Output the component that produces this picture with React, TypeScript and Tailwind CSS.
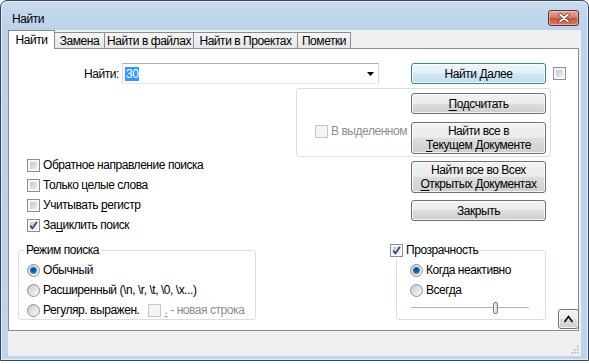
import React from "react";

function Check({ checked = false, disabled = false }: { checked?: boolean; disabled?: boolean }) {
  return (
    <span
      className={`relative inline-block w-[13px] h-[13px] shrink-0 border ${
        disabled ? "border-[#c8c8c8] bg-[#f4f4f4]" : "border-[#8e8f8f] bg-[#f7f7f7]"
      }`}
    >
      {!disabled && <span className="absolute inset-[2px] bg-[linear-gradient(135deg,#c2c6cc,#eef0f2)]" />}
      {checked && (
        <svg className="absolute left-0 top-0" width="11" height="11" viewBox="0 0 11 11">
          <path d="M2.2 5.6 L4.4 8.4 L9 1.8" fill="none" stroke="#2c4684" strokeWidth="1.7" />
        </svg>
      )}
    </span>
  );
}

function Radio({ on = false }: { on?: boolean }) {
  return (
    <span className="relative inline-flex items-center justify-center w-[13px] h-[13px] shrink-0 rounded-full border border-[#8e8f8f] bg-[linear-gradient(135deg,#c6c9ce,#fbfbfb)]">
      {on && (
        <span className="w-[7px] h-[7px] rounded-full bg-[radial-gradient(circle_at_45%_40%,#0b3f7a_0%,#1d6db5_45%,#7cc4f0_100%)]" />
      )}
    </span>
  );
}

function Btn({
  children,
  className = "",
  focus = false,
}: {
  children: React.ReactNode;
  className?: string;
  focus?: boolean;
}) {
  return (
    <div
      className={`flex flex-col items-center justify-center shrink-0 rounded-[3px] border text-center leading-[14px] whitespace-nowrap shadow-[inset_0_0_0_1px_rgba(255,255,255,0.75)] ${
        focus
          ? "border-[#3c7fb1] bg-[linear-gradient(#eef7fc,#e2f0f8_50%,#d2e7f4_50%,#c4deee)]"
          : "border-[#707070] bg-[linear-gradient(#f2f2f2,#ebebeb_50%,#dddddd_50%,#cfcfcf)]"
      } ${className}`}
    >
      {children}
    </div>
  );
}

function CheckRow({ checked, children }: { checked?: boolean; children: React.ReactNode }) {
  return (
    <div className="flex items-center gap-[3px] h-[16px] whitespace-nowrap">
      <Check checked={checked} />
      <span>{children}</span>
    </div>
  );
}

function RadioRow({ on, children }: { on?: boolean; children: React.ReactNode }) {
  return (
    <div className="flex items-center gap-[3px] h-[16px] whitespace-nowrap">
      <Radio on={on} />
      {children}
    </div>
  );
}

export default function App() {
  return (
    <div className="w-[589px] h-[364px] bg-white overflow-hidden font-['Liberation_Sans',Arial,sans-serif] text-[12px] tracking-[-0.45px] text-black">
      <div className="w-[589px] h-[361px] flex flex-col rounded-t-[7px] border border-[#3b4654] bg-[linear-gradient(#c8dbef,#bad2ea_30px,#bdd4ec)] shadow-[inset_0_0_0_1px_rgba(255,255,255,0.55)]">
        {/* title bar */}
        <div className="h-[29px] shrink-0 flex pl-[11px] pr-[9px]">
          <span className="mt-[10px] leading-[16px]">Найти</span>
          <div className="ml-auto mt-[9px] w-[31px] h-[16px] rounded-[3px] border border-[#6b2c22] bg-[linear-gradient(#e9a99b,#d4796a_50%,#c2503c_50%,#d7826d)] flex items-center justify-center shadow-[inset_0_0_0_1px_rgba(255,255,255,0.35)]">
            <svg width="12" height="10" viewBox="0 0 12 10">
              <path d="M2 1.5 L10 8.5 M10 1.5 L2 8.5" stroke="#5a2a24" strokeWidth="3.4" strokeLinecap="round" />
              <path d="M2 1.5 L10 8.5 M10 1.5 L2 8.5" stroke="#ffffff" strokeWidth="2" strokeLinecap="round" />
            </svg>
          </div>
        </div>

        {/* client area */}
        <div className="mx-[7px] mb-[4px] flex-1 flex flex-col bg-[#f0f0f0]">
          {/* tabs */}
          <div className="relative z-10 h-[18px] shrink-0 flex items-end">
            <div className="h-[19px] w-[47px] -mb-[1px] bg-white border border-b-0 border-[#898c95] flex items-center justify-center leading-[16px]">
              Найти
            </div>
            {[
              ["Замена", "w-[50px]"],
              ["Найти в файлах", "w-[89px]"],
              ["Найти в Проектах", "w-[104px]"],
              ["Пометки", "w-[53px]"],
            ].map(([t, w]) => (
              <div
                key={t}
                className={`${w} h-[16px] border-t border-r border-[#898c95] bg-[linear-gradient(#f5f5f5,#e6e6e6)] flex items-center justify-center leading-[14px] whitespace-nowrap`}
              >
                {t}
              </div>
            ))}
          </div>

          {/* tab panel */}
          <div className="h-[283px] w-[571px] shrink-0 border border-[#898c95] bg-white flex flex-col">
            {/* row: find what */}
            <div className="mt-[14px] h-[21px] shrink-0 flex items-center">
              <span className="w-[110px] text-right">Найти:</span>
              <div className="ml-[3px] w-[257px] h-[21px] flex items-center border border-[#abadb3] border-l-[#d8dde4] border-r-[#d8dde4] border-b-[#e3e9ef]">
                <span className="ml-[2px] px-[1px] h-[14px] leading-[14px] bg-[#3399ff] text-white">30</span>
                <svg className="ml-auto mr-[4px]" width="7" height="4" viewBox="0 0 7 4">
                  <path d="M0 0 H7 L3.5 4 Z" fill="#000" />
                </svg>
              </div>
              <Btn focus className="ml-[32px] w-[135px] h-[21px]">
                Найти Далее
              </Btn>
              <span className="ml-[7px] flex">
                <Check />
              </span>
            </div>

            {/* middle */}
            <div className="mt-[4px] h-[133px] shrink-0 flex items-start">
              <div className="w-[287px] pt-[69px] pl-[18px] flex flex-col gap-[4px]">
                <CheckRow>Обратное направление поиска</CheckRow>
                <CheckRow>Только целые слова</CheckRow>
                <CheckRow>
                  Учитывать <u className="underline-offset-[2px]">р</u>егистр
                </CheckRow>
                <CheckRow checked>
                  За<u className="underline-offset-[2px]">ц</u>иклить поиск
                </CheckRow>
              </div>

              <div className="w-[255px] flex flex-col">
                <div className="h-[69px] border border-[#d5dfe5] rounded-[3px] flex">
                  <div className="w-[114px] pl-[18px] pt-[34px]">
                    <div className="flex items-center gap-[3px] h-[16px] whitespace-nowrap text-[#8d8d8d]">
                      <Check disabled />
                      <span>В выделенном</span>
                    </div>
                  </div>
                  <div className="pt-[4px] flex flex-col gap-[8px]">
                    <Btn className="w-[135px] h-[21px]">
                      <span>
                        <u className="underline-offset-[2px]">П</u>одсчитать
                      </span>
                    </Btn>
                    <Btn className="w-[135px] h-[32px]">
                      <span>Найти все в</span>
                      <span>
                        <u className="underline-offset-[2px]">Т</u>екущем Документе
                      </span>
                    </Btn>
                  </div>
                </div>
                <Btn className="ml-[115px] mt-[4px] w-[135px] h-[32px]">
                  <span>Найти все во Всех</span>
                  <span>
                    <u className="underline-offset-[2px]">О</u>ткрытых Документах
                  </span>
                </Btn>
                <Btn className="ml-[115px] mt-[7px] w-[135px] h-[21px]">Закрыть</Btn>
              </div>
            </div>

            {/* bottom */}
            <div className="mt-[21px] flex items-start">
              <fieldset className="ml-[9px] w-[238px] min-w-0 h-[78px] shrink-0 border border-[#d5dfe5] rounded-[3px]">
                <legend className="ml-[5px] px-[2px] leading-[16px]">Режим поиска</legend>
                <div className="pl-[8px] mt-[4px] flex flex-col gap-[4px]">
                  <RadioRow on>Обычный</RadioRow>
                  <RadioRow>Расширенный (\n, \r, \t, \0, \x...)</RadioRow>
                  <RadioRow>
                    <span>Регуляр. выражен.</span>
                    <span className="ml-[6px] flex items-center gap-[3px] text-[#8d8d8d]">
                      <Check disabled />
                      <span>
                        <u className="underline-offset-[2px]">.</u> - новая строка
                      </span>
                    </span>
                  </RadioRow>
                </div>
              </fieldset>

              <fieldset className="ml-[140px] w-[150px] min-w-0 h-[78px] shrink-0 border border-[#d5dfe5] rounded-[3px]">
                <legend className="-ml-[7px] pr-[2px] bg-white flex items-center gap-[3px] leading-[16px]">
                  <Check checked />
                  <span>Прозрачность</span>
                </legend>
                <div className="pl-[13px] mt-[4px] flex flex-col gap-[4px]">
                  <RadioRow on>Когда неактивно</RadioRow>
                  <RadioRow>Всегда</RadioRow>
                  <div className="relative ml-[1px] w-[118px] h-[12px]">
                    <div className="absolute left-0 right-0 top-[5px] h-[2px] border-t border-[#b4b4b4] border-b border-b-[#f8f8f8] bg-[#e7eaea]" />
                    <div className="absolute left-[82px] top-0 w-[5px] h-[12px] rounded-[2px] border border-[#7a7a7a] bg-[linear-gradient(90deg,#f4f4f4,#d8d8d8)]" />
                  </div>
                </div>
              </fieldset>

              <Btn className="ml-[12px] mt-[67px] w-[21px] h-[20px]">
                <svg width="11" height="8" viewBox="0 0 11 8">
                  <path d="M1.5 7 L5.5 1.5 L9.5 7" fill="none" stroke="#000" strokeWidth="1.5" />
                </svg>
              </Btn>
            </div>
          </div>

          {/* status strip */}
          <div className="flex-1 flex items-end justify-end pr-[2px] pb-[2px]">
            <svg width="10" height="10" viewBox="0 0 10 10">
              {[
                [8, 2],
                [8, 5],
                [5, 5],
                [8, 8],
                [5, 8],
                [2, 8],
              ].map(([x, y]) => (
                <rect key={`${x}-${y}`} x={x} y={y} width="1.5" height="1.5" fill="#a8adb3" />
              ))}
            </svg>
          </div>
        </div>
      </div>
    </div>
  );
}
